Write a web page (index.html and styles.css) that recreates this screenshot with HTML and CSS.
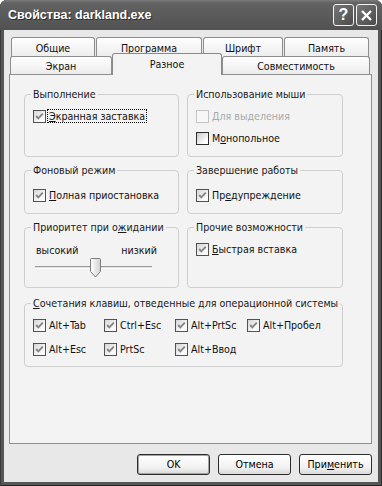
FILE: index.html
```html
<!DOCTYPE html>
<html lang="ru">
<head>
    <meta charset="UTF-8">
    <meta name="viewport" content="width=device-width, initial-scale=1.0">
    <title>Свойства: darkland.exe</title>
    <link rel="stylesheet" href="styles.css">
</head>
<body>
<div class="window">
    <div class="titlebar">
        <span class="title">Свойства: darkland.exe</span>
        <span class="tbtn">?</span>
        <span class="tbtn">
            <svg width="13" height="13" viewBox="0 0 13 13"><path d="M2 2 L11 11 M11 2 L2 11" stroke="#fff" stroke-width="2.4" fill="none"/></svg>
        </span>
    </div>

    <div class="client">
        <!-- вкладки -->
        <div class="tabrow">
            <div class="tab" style="width:84px">Общие</div>
            <div class="tab" style="width:106px">Программа</div>
            <div class="tab" style="width:80px">Шрифт</div>
            <div class="tab" style="width:85px">Память</div>
        </div>
        <div class="tabrow lower">
            <div class="tab" style="width:102px">Экран</div>
            <div class="tab active" style="width:110px">Разное</div>
            <div class="tab" style="width:148px">Совместимость</div>
        </div>

        <div class="panel">
            <div class="groups">
                <fieldset class="group r1">
                    <legend>Выполнение</legend>
                    <label class="check first">
                        <span class="box"><svg width="11" height="11" viewBox="0 0 11 11"><path d="M2.2 5 L4.3 7.3 L8.8 2.6" stroke="#868686" stroke-width="1.9" fill="none"/></svg></span>
                        <span class="focus"><u>Э</u>кранная заставка</span>
                    </label>
                </fieldset>

                <fieldset class="group r1">
                    <legend>Использование мыши</legend>
                    <label class="check disabled">
                        <span class="box"></span>
                        <span><u>Д</u>ля выделения</span>
                    </label>
                    <label class="check">
                        <span class="box empty"></span>
                        <span>М<u>о</u>нопольное</span>
                    </label>
                </fieldset>

                <fieldset class="group r2">
                    <legend>Фоновый режим</legend>
                    <label class="check">
                        <span class="box"><svg width="11" height="11" viewBox="0 0 11 11"><path d="M2.2 5 L4.3 7.3 L8.8 2.6" stroke="#868686" stroke-width="1.9" fill="none"/></svg></span>
                        <span><u>П</u>олная приостановка</span>
                    </label>
                </fieldset>

                <fieldset class="group r2">
                    <legend>Завершение работы</legend>
                    <label class="check">
                        <span class="box"><svg width="11" height="11" viewBox="0 0 11 11"><path d="M2.2 5 L4.3 7.3 L8.8 2.6" stroke="#868686" stroke-width="1.9" fill="none"/></svg></span>
                        <span>Пр<u>е</u>дупреждение</span>
                    </label>
                </fieldset>

                <fieldset class="group r3">
                    <legend>Приоритет при о<u>ж</u>идании</legend>
                    <div class="scale">
                        <span>высокий</span>
                        <span>низкий</span>
                    </div>
                    <div class="slider">
                        <div class="track"></div>
                        <svg class="thumb" width="11" height="20" viewBox="0 0 11 20">
                            <defs>
                                <linearGradient id="tg" x1="0" y1="0" x2="1" y2="0">
                                    <stop offset="0" stop-color="#ffffff"/>
                                    <stop offset="1" stop-color="#d2d2d2"/>
                                </linearGradient>
                            </defs>
                            <path d="M1.5 0.5 H9.5 Q10.5 0.5 10.5 1.5 V13.5 L5.5 19 L0.5 13.5 V1.5 Q0.5 0.5 1.5 0.5 Z" fill="url(#tg)" stroke="#7c7c7c"/>
                        </svg>
                    </div>
                </fieldset>

                <fieldset class="group r3">
                    <legend>Прочие возможности</legend>
                    <label class="check">
                        <span class="box"><svg width="11" height="11" viewBox="0 0 11 11"><path d="M2.2 5 L4.3 7.3 L8.8 2.6" stroke="#868686" stroke-width="1.9" fill="none"/></svg></span>
                        <span><u>Б</u>ыстрая вставка</span>
                    </label>
                </fieldset>
            </div>

            <!-- сочетания клавиш -->
            <fieldset class="group keys">
                <legend><u>С</u>очетания клавиш, отведенные для операционной системы</legend>
                <div class="keygrid">
                    <label class="check"><span class="box"><svg width="11" height="11" viewBox="0 0 11 11"><path d="M2.2 5 L4.3 7.3 L8.8 2.6" stroke="#868686" stroke-width="1.9" fill="none"/></svg></span><span>Alt+Tab</span></label>
                    <label class="check"><span class="box"><svg width="11" height="11" viewBox="0 0 11 11"><path d="M2.2 5 L4.3 7.3 L8.8 2.6" stroke="#868686" stroke-width="1.9" fill="none"/></svg></span><span>Ctrl+Esc</span></label>
                    <label class="check"><span class="box"><svg width="11" height="11" viewBox="0 0 11 11"><path d="M2.2 5 L4.3 7.3 L8.8 2.6" stroke="#868686" stroke-width="1.9" fill="none"/></svg></span><span>Alt+PrtSc</span></label>
                    <label class="check"><span class="box"><svg width="11" height="11" viewBox="0 0 11 11"><path d="M2.2 5 L4.3 7.3 L8.8 2.6" stroke="#868686" stroke-width="1.9" fill="none"/></svg></span><span>Alt+Пробел</span></label>
                    <label class="check"><span class="box"><svg width="11" height="11" viewBox="0 0 11 11"><path d="M2.2 5 L4.3 7.3 L8.8 2.6" stroke="#868686" stroke-width="1.9" fill="none"/></svg></span><span>Alt+Esc</span></label>
                    <label class="check"><span class="box"><svg width="11" height="11" viewBox="0 0 11 11"><path d="M2.2 5 L4.3 7.3 L8.8 2.6" stroke="#868686" stroke-width="1.9" fill="none"/></svg></span><span>PrtSc</span></label>
                    <label class="check"><span class="box"><svg width="11" height="11" viewBox="0 0 11 11"><path d="M2.2 5 L4.3 7.3 L8.8 2.6" stroke="#868686" stroke-width="1.9" fill="none"/></svg></span><span>Alt+Ввод</span></label>
                </div>
            </fieldset>
        </div>

        <div class="buttons">
            <button type="button" class="btn default">OK</button>
            <button type="button" class="btn">Отмена</button>
            <button type="button" class="btn">При<u>м</u>енить</button>
        </div>
    </div>
</div>
</body>
</html>
```

FILE: styles.css
```css
* {
    box-sizing: border-box;
}
body {
    margin: 0;
    background: #fff;
    font-family: "DejaVu Sans Condensed", "DejaVu Sans", sans-serif;
    font-stretch: condensed;
    font-size: 10.6px;
    color: #111;
}
.window {
    width: 382px;
    height: 486px;
    display: flex;
    flex-direction: column;
    background: #565656;
    border-radius: 7px 7px 0 0;
    box-shadow: inset 1px 0 #3a3a3a, inset -1px 0 #2c2c2c, inset 0 -1px #262626;
}
.titlebar {
    height: 30px;
    display: flex;
    align-items: center;
    gap: 2px;
    padding: 0 5px 0 8px;
    border-radius: 7px 7px 0 0;
    background: linear-gradient(#7c7c7c, #626262 3px, #5a5a5a 55%, #515151);
}
.title {
    flex: 1;
    color: #fff;
    font-family: "Liberation Sans", Arial, sans-serif;
    font-stretch: normal;
    font-weight: bold;
    font-size: 12.5px;
    text-shadow: 1px 1px #2c2c2c;
}
.tbtn {
    width: 21px;
    height: 22px;
    display: flex;
    align-items: center;
    justify-content: center;
    border: 1px solid #f4f4f4;
    border-radius: 3px;
    background: linear-gradient(135deg, #767676, #4c4c4c);
    color: #fff;
    font-family: "Liberation Sans", Arial, sans-serif;
    font-weight: bold;
    font-size: 16px;
}
.client {
    flex: 1;
    margin: 0 4px 4px;
    padding-top: 7px;
    background: #e8e8e8;
}

/* вкладки */
.tabrow {
    display: flex;
    gap: 1px;
    height: 19px;
    padding-left: 7px;
}
.tabrow.lower {
    gap: 0;
    height: 18px;
    padding-left: 6px;
}
.tab {
    height: 20px;
    padding-top: 3px;
    border: 1px solid #8e8e8e;
    border-bottom: none;
    border-radius: 3px 3px 0 0;
    background: linear-gradient(#fefefe, #ececec);
    text-align: center;
    line-height: 15px;
}
.lower .tab {
    height: 18px;
    padding-top: 2px;
}
.lower .tab.active {
    position: relative;
    z-index: 1;
    height: 22px;
    margin-top: -3px;
    padding-top: 3px;
    background: #f3f3f3;
    border-color: #8a8a8a;
}
.panel {
    width: 363px;
    height: 370px;
    margin-left: 5px;
    padding: 13px 0 0 14px;
    border: 1px solid #8e8e8e;
    background: #f3f3f3;
}

/* группы */
.groups {
    display: grid;
    grid-template-columns: 155px 156px;
    column-gap: 8px;
    row-gap: 7px;
}
.group {
    margin: 0;
    min-width: 0;
    padding: 4px 8px 0;
    border: 1px solid #cfcfcf;
    border-radius: 4px;
}
.group legend {
    padding: 0 2px;
    margin-left: -2px;
    line-height: 13px;
    white-space: nowrap;
    color: #1a1a1a;
}
.r1 { height: 69px; }
.r2 { height: 50px; padding-top: 7px; }
.r3 { height: 67px; }
.keys {
    width: 319px;
    height: 70px;
    margin-top: 9px;
    padding-top: 3px;
}
.check {
    display: flex;
    align-items: center;
    height: 22px;
    white-space: nowrap;
}
.box {
    flex: none;
    width: 13px;
    height: 13px;
    margin-right: 3px;
    border: 1px solid #525252;
    background: linear-gradient(135deg, #d6d6d6, #fbfbfb 75%);
}
.box svg {
    display: block;
}
.box.empty {
    border-color: #2e2e2e;
    background: linear-gradient(135deg, #c9c9c9, #ffffff 80%);
}
.check.disabled {
    color: #a9a9a9;
}
.disabled .box {
    border-color: #c4c4c4;
    background: #f7f7f7;
}
.first .box {
    margin-right: 2px;
}
.focus {
    padding: 0 1px;
    line-height: 12px;
    outline: 1px dotted #000;
    outline-offset: 0;
}

/* ползунок */
.scale {
    display: flex;
    justify-content: space-between;
    padding: 6px 13px 0 3px;
    line-height: 13px;
}
.slider {
    position: relative;
    width: 117px;
    height: 20px;
    margin: 1px 0 0 2px;
    padding-top: 8px;
}
.track {
    height: 3px;
    border-top: 1px solid #9c9c9c;
    border-bottom: 1px solid #ffffff;
    background: #e0e0e0;
}
.thumb {
    position: absolute;
    top: 0;
    left: 55px;
}
.keygrid {
    display: grid;
    grid-template-columns: 71px 71px 72px auto;
}
.keygrid .check {
    height: 24px;
}

/* кнопки */
.buttons {
    display: flex;
    justify-content: flex-end;
    gap: 8px;
    margin-top: 10px;
    padding-right: 6px;
}
.btn {
    width: 73px;
    height: 21px;
    padding: 0;
    border: 1px solid #2c2c2c;
    border-radius: 3px;
    background: linear-gradient(#ffffff, #f2f2f2 65%, #dadada);
    font: inherit;
    color: #000;
    line-height: 19px;
}
.btn.default {
    box-shadow: inset 0 0 0 1px #a4a4a4;
}
```
